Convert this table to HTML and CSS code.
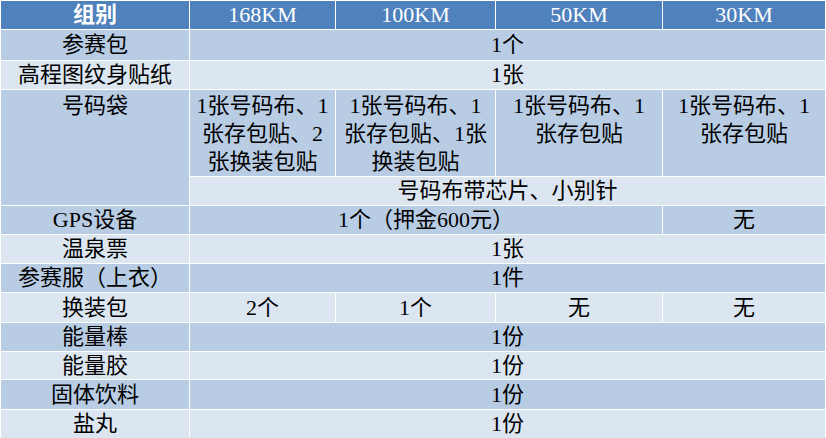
FILE: index.html
```html
<!DOCTYPE html>
<html lang="zh-CN">
<head>
<meta charset="utf-8">
<title>装备表</title>
<link rel="stylesheet" href="styles.css">
</head>
<body>
<div class="table">
  <div class="c head"><span class="strong">组别</span></div>
  <div class="c head">168KM</div>
  <div class="c head">100KM</div>
  <div class="c head">50KM</div>
  <div class="c head">30KM</div>

  <div class="c dark">参赛包</div>
  <div class="c dark span4">1个</div>

  <div class="c light">高程图纹身贴纸</div>
  <div class="c light span4">1张</div>

  <div class="c dark top rows2">号码袋</div>
  <div class="c dark top">1张号码布、1<br>张存包贴、2<br>张换装包贴</div>
  <div class="c dark top">1张号码布、1<br>张存包贴、1张<br>换装包贴</div>
  <div class="c dark top">1张号码布、1<br>张存包贴</div>
  <div class="c dark top">1张号码布、1<br>张存包贴</div>
  <div class="c light span4">号码布带芯片、小别针</div>

  <div class="c dark">GPS设备</div>
  <div class="c dark span3">1个（押金600元）</div>
  <div class="c dark">无</div>

  <div class="c light">温泉票</div>
  <div class="c light span4">1张</div>

  <div class="c dark">参赛服（上衣）</div>
  <div class="c dark span4">1件</div>

  <div class="c light">换装包</div>
  <div class="c light">2个</div>
  <div class="c light">1个</div>
  <div class="c light">无</div>
  <div class="c light">无</div>

  <div class="c dark">能量棒</div>
  <div class="c dark span4">1份</div>

  <div class="c light">能量胶</div>
  <div class="c light span4">1份</div>

  <div class="c dark">固体饮料</div>
  <div class="c dark span4">1份</div>

  <div class="c light">盐丸</div>
  <div class="c light span4">1份</div>
</div>
</body>
</html>
```
FILE: styles.css
```css
html, body {
  margin: 0;
  padding: 0;
  background: #ffffff;
}

.table {
  display: grid;
  grid-template-columns: 188px 145px 159px 166px 162px;
  grid-template-rows: 28px 30px 28px 86px 28px 28px 28px 28px 29px 28px 27px 29px 28px;
  gap: 1px;
  padding: 1px 1px 0 1px;
  background: #ffffff;
  width: 824px;
  font-family: "Liberation Serif", "Noto Sans CJK SC", serif;
  font-size: 22px;
  color: #000000;
}

.c {
  display: flex;
  align-items: center;
  justify-content: center;
  text-align: center;
  line-height: 28px;
  white-space: nowrap;
  overflow: hidden;
}

.head {
  background: #4f81bd;
  color: #ffffff;
}

.strong {
  font-weight: bold;
}

.dark {
  background: #b8cce4;
}

.light {
  background: #dce6f1;
}

.top {
  align-items: flex-start;
  padding-top: 2px;
  line-height: 28px;
}

.rows2 {
  grid-row: span 2;
}

.span4 {
  grid-column: span 4;
}

.span3 {
  grid-column: span 3;
}
```
